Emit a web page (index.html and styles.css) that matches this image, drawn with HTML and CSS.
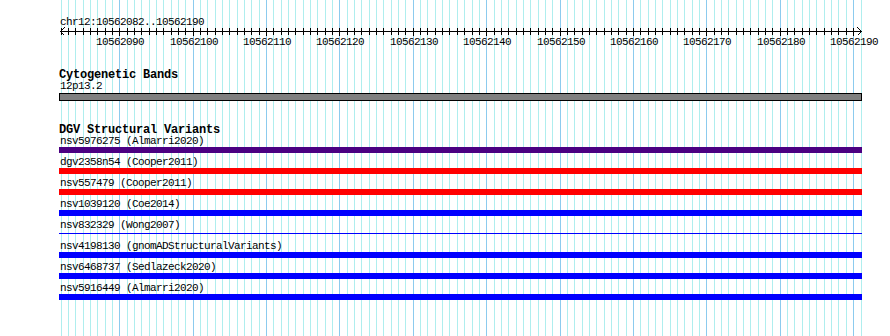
FILE: index.html
```html
<!DOCTYPE html>
<html lang="en">
<head>
    <meta charset="UTF-8">
    <meta name="viewport" content="width=device-width, initial-scale=1.0">
    <title>DGV Structural Variants</title>
    <link rel="stylesheet" href="styles.css">
</head>
<body>
    <div class="panel">
        <svg id="grid" class="grid" width="890" height="336"></svg>

        <div class="tracks">
            <svg id="ruler" class="ruler" width="890" height="50">
                <text x="60" y="25" class="ruler-title">chr12:10562082..10562190</text>
            </svg>

            <div class="track cyto">
                <div class="track-title">Cytogenetic Bands</div>
                <div class="feature-label">12p13.2</div>
                <div class="band"></div>
            </div>

            <div class="track dgv">
                <div class="track-title">DGV Structural Variants</div>
                <div class="feature">
                    <div class="feature-label">nsv5976275 (Almarri2020)</div>
                    <div class="bar bar-indigo"></div>
                </div>
                <div class="feature">
                    <div class="feature-label">dgv2358n54 (Cooper2011)</div>
                    <div class="bar bar-red"></div>
                </div>
                <div class="feature">
                    <div class="feature-label">nsv557479 (Cooper2011)</div>
                    <div class="bar bar-red"></div>
                </div>
                <div class="feature">
                    <div class="feature-label">nsv1039120 (Coe2014)</div>
                    <div class="bar bar-blue"></div>
                </div>
                <div class="feature">
                    <div class="feature-label">nsv832329 (Wong2007)</div>
                    <div class="bar bar-thin"></div>
                </div>
                <div class="feature">
                    <div class="feature-label">nsv4198130 (gnomADStructuralVariants)</div>
                    <div class="bar bar-blue"></div>
                </div>
                <div class="feature">
                    <div class="feature-label">nsv6468737 (Sedlazeck2020)</div>
                    <div class="bar bar-blue"></div>
                </div>
                <div class="feature">
                    <div class="feature-label">nsv5916449 (Almarri2020)</div>
                    <div class="bar bar-blue"></div>
                </div>
            </div>
        </div>
    </div>

    <script>
        const NS = 'http://www.w3.org/2000/svg';
        const start = 10562082;
        const end = 10562190;
        const scale = 800 / (end - start + 1);
        const grid = document.getElementById('grid');
        const ruler = document.getElementById('ruler');

        function px(pos) {
            return Math.round(60.5 + (pos - start) * scale);
        }

        function line(svg, x1, y1, x2, y2, cls) {
            const el = document.createElementNS(NS, 'line');
            el.setAttribute('x1', x1);
            el.setAttribute('y1', y1);
            el.setAttribute('x2', x2);
            el.setAttribute('y2', y2);
            el.setAttribute('class', cls);
            svg.appendChild(el);
        }

        // grid: one line per base, darker every 10 bp
        for (let pos = start; pos <= end + 1; pos++) {
            const x = px(pos) + 0.5;
            line(grid, x, 0, x, 336, pos % 10 === 0 ? 'grid-major' : 'grid-minor');
        }

        // ruler arrow
        const y = 31.5;
        line(ruler, 60, y, 862, y, 'tick');
        line(ruler, 60.5, y, 64.5, y - 4, 'tick');
        line(ruler, 60.5, y, 64.5, y + 4, 'tick');
        line(ruler, 861.5, y, 857.5, y - 4, 'tick');
        line(ruler, 861.5, y, 857.5, y + 4, 'tick');

        for (let pos = start; pos <= end; pos++) {
            const x = px(pos) + 0.5;
            if (pos % 10 === 0) {
                line(ruler, x, 28, x, 36, 'tick');
                // labels are 8 digits of 6px, centred on the tick
                const label = document.createElementNS(NS, 'text');
                label.setAttribute('x', px(pos) - 23);
                label.setAttribute('y', 45);
                label.textContent = pos;
                ruler.appendChild(label);
            } else {
                line(ruler, x, 28, x, 35, 'tick');
            }
        }
    </script>
</body>
</html>
```

FILE: styles.css
```css
body {
    margin: 0;
    background: #fff;
    color: #000;
    font-family: "Liberation Mono", "DejaVu Sans Mono", monospace;
}

.panel {
    position: relative;
    width: 890px;
    height: 336px;
    overflow: hidden;
}

.grid {
    position: absolute;
    top: 0;
    left: 0;
}

.grid line {
    shape-rendering: crispEdges;
    stroke-width: 1;
}

.grid-minor {
    stroke: #afeeee;
}

.grid-major {
    stroke: #8ccbee;
}

.tracks {
    position: relative;
}

.ruler {
    display: block;
}

.ruler .tick {
    stroke: #000;
    stroke-width: 1;
    shape-rendering: crispEdges;
}

.ruler text {
    font-family: "Liberation Mono", monospace;
    font-size: 11px;
    letter-spacing: -0.6px;
    fill: #000;
}

.track {
    width: 803px;
    padding-left: 59px;
}

.track-title {
    font-size: 12px;
    font-weight: bold;
    line-height: 12px;
    letter-spacing: -0.2px;
    white-space: pre;
}

.feature-label {
    font-size: 11px;
    line-height: 11px;
    letter-spacing: -0.6px;
    padding-left: 1px;
    white-space: pre;
}

.cyto {
    margin-top: 19px;
}

.band {
    margin-top: 1px;
    height: 6px;
    border: 1px solid #000;
    background: #808080;
}

.dgv {
    margin-top: 23px;
}

.feature {
    height: 21px;
}

.bar {
    height: 6px;
}

.bar-indigo {
    background: #4b0082;
}

.bar-red {
    background: #ff0000;
}

.bar-blue {
    background: #0000ff;
}

.bar-thin {
    height: 1px;
    margin-top: 2px;
    background: #0000ff;
}
```
